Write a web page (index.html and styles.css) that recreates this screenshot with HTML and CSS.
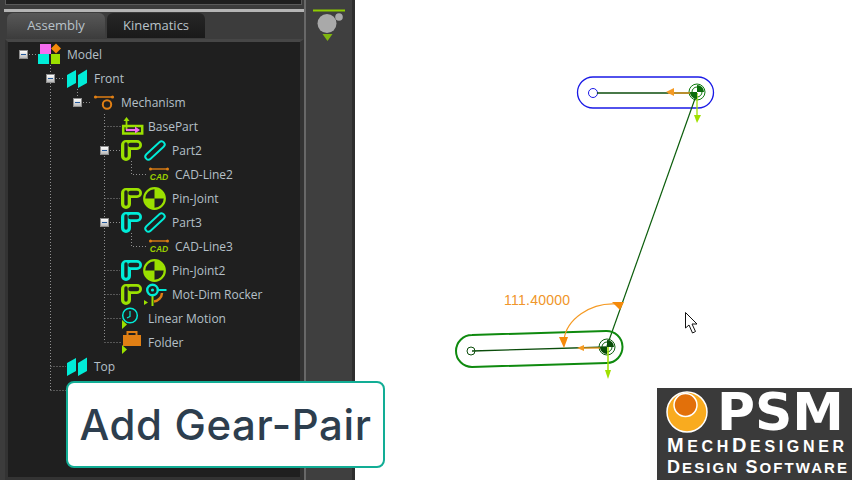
FILE: index.html
```html
<!DOCTYPE html>
<html lang="en">
<head>
<meta charset="utf-8">
<title>MechDesigner</title>
<link rel="stylesheet" href="styles.css">
</head>
<body>
<svg class="defs" width="0" height="0" aria-hidden="true">
  <defs>
    <symbol id="part" viewBox="0 0 21 21">
      <path d="M5 5H16M5 5V16" fill="none" stroke="currentColor" stroke-width="10" stroke-linecap="round"/>
      <path d="M5 4V16" fill="none" stroke="#1f1f1f" stroke-width="3.400" stroke-linecap="round"/>
      <path d="M9.500 5H16" fill="none" stroke="#1f1f1f" stroke-width="4.600" stroke-linecap="round"/>
    </symbol>
    <symbol id="link" viewBox="0 0 22 21">
      <path d="M4.500 16.500 17.500 4.500" fill="none" stroke="currentColor" stroke-width="8.200" stroke-linecap="round"/>
      <path d="M4.500 16.500 17.500 4.500" fill="none" stroke="#1f1f1f" stroke-width="4.400" stroke-linecap="round"/>
    </symbol>
    <symbol id="plane" viewBox="0 0 20 19">
      <path d="M0 6 9 1V14L0 19ZM11 6 20 .5V14L11 19Z" fill="currentColor"/>
    </symbol>
    <symbol id="joint" viewBox="0 0 23 23">
      <circle cx="11.500" cy="11.500" r="10.300" fill="#1f1f1f" stroke="#9be000" stroke-width="2.200"/>
      <path d="M11.500 11.500V1.500A10 10 0 0 1 21.500 11.500ZM11.500 11.500V21.500A10 10 0 0 1 1.500 11.500Z" fill="#9be000"/>
    </symbol>
    <symbol id="cad" viewBox="0 0 20 4">
      <path d="M1 2H19" stroke="#e07f14" stroke-width="1.400"/>
      <circle cx="1.500" cy="2" r="1.500" fill="#e07f14"/>
      <circle cx="18.500" cy="2" r="1.500" fill="#e07f14"/>
    </symbol>
  </defs>
</svg>
<div class="app">
  <aside class="left">
    <div class="topstrip"></div>
    <div class="divider"></div>
    <div class="tabs">
      <span class="tab active">Assembly</span>
      <span class="tab">Kinematics</span>
    </div>
    <div class="treebox">
      <svg class="lines" width="292" height="438" viewBox="8 42 292 438" aria-hidden="true">
        <path d="M50.500 65V390M29 54.500H38M56 78.500H65M77.500 89V102M83 102.500H92M104.500 114V342M104.500 126.500H122M110 150.500H120M131.500 161V174.500H148M104.500 198.500H120M110 222.500H120M131.500 233V246.500H148M104.500 270.500H120M104.500 294.500H120M104.500 318.500H121M104.500 342.500H122M50.500 366.500H66M50.500 390.500H66" fill="none" stroke="#8f8f8f" stroke-dasharray="1 2"/>
      </svg>
      <div class="row l1"><i class="tog"></i>
        <svg class="ico" width="24" height="22" viewBox="0 0 24 22"><rect x="2" y="1" width="11" height="10" fill="#f56cf0"/><rect y="11" width="11" height="10" fill="#00ecd8"/><rect x="13" y="11" width="9" height="10" fill="#9be000"/><path d="M18 .5 23 5.500 18 10.500 13 5.500Z" fill="#f58a0a"/></svg>
        <span class="lab gm">Model</span></div>
      <div class="row l2"><i class="tog"></i>
        <svg class="ico cy" width="20" height="19"><use href="#plane"/></svg>
        <span class="lab g2">Front</span></div>
      <div class="row l3"><i class="tog"></i>
        <svg class="ico" width="20" height="16" viewBox="0 0 20 16"><path d="M1 3H19" stroke="#e07f14" stroke-width="1.500"/><circle cx="1.500" cy="3" r="1.600" fill="#e07f14"/><circle cx="18.500" cy="3" r="1.600" fill="#e07f14"/><circle cx="13" cy="10.500" r="4.200" fill="none" stroke="#e07f14" stroke-width="2"/></svg>
        <span class="lab g3">Mechanism</span></div>
      <div class="row l4">
        <svg class="ico" width="22" height="18" viewBox="0 0 22 18"><rect x="1.200" y="9" width="19" height="7.500" fill="none" stroke="#9be000" stroke-width="2.500"/><path d="M4.500 3V13" stroke="#9be000" stroke-width="1.800"/><path d="M4.500 0 7.500 4H1.500Z" fill="#9be000"/><path d="M4 13H14" stroke="#f56cf0" stroke-width="2.200"/><path d="M18 13 13 9.500V16.500Z" fill="#f56cf0"/></svg>
        <span class="lab g4">BasePart</span></div>
      <div class="row l5"><i class="tog"></i>
        <svg class="ico lime" width="21" height="21"><use href="#part"/></svg>
        <svg class="ico cy sl" width="22" height="21"><use href="#link"/></svg>
        <span class="lab g5">Part2</span></div>
      <div class="row l6">
        <span class="cadico"><svg width="20" height="4"><use href="#cad"/></svg><b>CAD</b></span>
        <span class="lab g6">CAD-Line2</span></div>
      <div class="row l5">
        <svg class="ico lime" width="21" height="21"><use href="#part"/></svg>
        <svg class="ico sj" width="23" height="23"><use href="#joint"/></svg>
        <span class="lab g5">Pin-Joint</span></div>
      <div class="row l5"><i class="tog"></i>
        <svg class="ico cy" width="21" height="21"><use href="#part"/></svg>
        <svg class="ico cy sl" width="22" height="21"><use href="#link"/></svg>
        <span class="lab g5">Part3</span></div>
      <div class="row l6">
        <span class="cadico"><svg width="20" height="4"><use href="#cad"/></svg><b>CAD</b></span>
        <span class="lab g6">CAD-Line3</span></div>
      <div class="row l5">
        <svg class="ico cy" width="21" height="21"><use href="#part"/></svg>
        <svg class="ico sj" width="23" height="23"><use href="#joint"/></svg>
        <span class="lab g5">Pin-Joint2</span></div>
      <div class="row l5">
        <svg class="ico lime" width="21" height="21"><use href="#part"/></svg>
        <svg class="ico sj" width="23" height="24" viewBox="0 0 23 24"><path d="M1 18 5 20.500 1 23Z" fill="#9be000"/><path d="M19 11A9 9 0 0 1 11 19.500" fill="none" stroke="#e07f14" stroke-width="2.500"/><path d="M9.500 13V24" stroke="#9be000" stroke-width="2"/><circle cx="9.500" cy="8" r="5.300" fill="#1f1f1f" stroke="#00ecd8" stroke-width="2.400"/><circle cx="9.500" cy="8" r="1.600" fill="#00ecd8"/><path d="M14 8H23.500" stroke="#00ecd8" stroke-width="2"/></svg>
        <span class="lab g5">Mot-Dim Rocker</span></div>
      <div class="row l4">
        <svg class="ico" width="22" height="24" viewBox="0 0 22 24"><circle cx="8" cy="9.500" r="7.300" fill="none" stroke="#00ecd8" stroke-width="1.500"/><path d="M8 5V10.500L5 12" fill="none" stroke="#00ecd8" stroke-width="1.200"/><path d="M0 14 5 18.500 0 23Z" fill="#9be000"/></svg>
        <span class="lab g4">Linear Motion</span></div>
      <div class="row l4">
        <svg class="ico" width="22" height="24" viewBox="0 0 22 24"><rect x="1" y="5" width="18" height="11" fill="#e07f14"/><path d="M5.500 5V2H14.500V5" fill="none" stroke="#e07f14" stroke-width="2"/><path d="M0 15 5 19.500 0 24Z" fill="#9be000"/></svg>
        <span class="lab g4">Folder</span></div>
      <div class="row l2">
        <svg class="ico cy" width="20" height="19"><use href="#plane"/></svg>
        <span class="lab g2">Top</span></div>
      <div class="row l2">
        <svg class="ico cy" width="20" height="19"><use href="#plane"/></svg></div>
    </div>
  </aside>
  <div class="rail">
    <svg width="36" height="36" viewBox="0 0 36 36"><path d="M2 1.500H34" stroke="#8fcc00" stroke-width="2"/><circle cx="16" cy="14.500" r="9.500" fill="#a9a9a9"/><circle cx="28" cy="8" r="3.800" fill="#a9a9a9"/><path d="M11.500 25H21.500L16.500 32Z" fill="#7fb510"/></svg>
  </div>
  <main class="canvas">
    <svg class="drawing" width="497" height="480" viewBox="355 0 497 480">
      <g fill="none">
        <path d="M593 77H698A15.500 15.500 0 0 1 698 108H593A15.500 15.500 0 0 1 593 77Z" stroke="#1a1ae6" stroke-width="1.300"/>
        <circle cx="593" cy="93" r="4.500" stroke="#1a1ae6"/>
        <path d="M597 93H697" stroke="#0b4d0b" stroke-width="1.300"/>
        <circle cx="697" cy="92" r="8" stroke="#0b7a0b"/>
        <circle cx="697" cy="92" r="5" stroke="#0b7a0b"/>
        <path d="M697 93 607 346" stroke="#0b5d0b" stroke-width="1.200"/>
        <path d="M668 93H697" stroke="#f59a23" stroke-width="1.300"/>
        <path d="M697 93V118" stroke="#a0e000" stroke-width="1.300"/>
        <path d="M472 351 607 347" stroke="#0b4d0b" stroke-width="1.300"/>
        <path d="M472 335 606 331A16 16 0 0 1 607 363L472 367A16 16 0 0 1 472 335Z" stroke="#0f8a0f" stroke-width="2"/>
        <circle cx="471" cy="351" r="4" stroke="#0b4d0b"/>
        <circle cx="607" cy="347" r="8" stroke="#0b5d0b"/>
        <circle cx="607" cy="347" r="5" stroke="#0b5d0b"/>
        <path d="M579 348H607" stroke="#f59a23" stroke-width="1.300"/>
        <path d="M608 347V376" stroke="#a0e000" stroke-width="1.500"/>
        <path d="M564 340C566 320 590 302 617 304" stroke="#f59a23" stroke-width="1.200"/>
      </g>
      <path d="M697 92V85A7 7 0 0 1 704 92ZM697 92V99A7 7 0 0 1 690 92Z" fill="#0b6d0b"/>
      <path d="M607 347V340A7 7 0 0 1 614 347ZM607 347V354A7 7 0 0 1 600 347Z" fill="#084d08"/>
      <path d="M666 92 674 88V96Z" fill="#f59a23"/>
      <path d="M577 348 584 345V351Z" fill="#f59a23"/>
      <path d="M694 115H701L697 123Z" fill="#a0e000"/>
      <path d="M605 370H611L608 379Z" fill="#a0e000"/>
      <path d="M612 302 624 302 620 310Z" fill="#f58a0a"/>
      <path d="M559 337H568L564 348Z" fill="#f58a0a"/>
      <path d="M685.500 312.500V328L689 325 692.500 333 695.500 331.500 692 324H697Z" fill="#fff" stroke="#111"/>
      <text class="dim" x="504" y="305">111.40000</text>
    </svg>
  </main>
</div>
<div class="callout">Add Gear-Pair</div>
<div class="logo">
  <svg width="195" height="92" viewBox="0 0 195 92">
    <circle cx="30" cy="24" r="20" fill="#f9ab1f" stroke="#fff" stroke-width="1.500"/>
    <circle cx="28.500" cy="17" r="11.500" fill="#e2700a" stroke="#fff" stroke-width="1.500"/>
    <text class="psm" x="60" y="42" textLength="127" lengthAdjust="spacingAndGlyphs">PSM</text>
    <text class="mech" x="10" y="64" textLength="177" lengthAdjust="spacing"><tspan class="big">M</tspan>ECH<tspan class="big">D</tspan>ESIGNER</text>
    <text class="mech two" x="10" y="85" textLength="180" lengthAdjust="spacing"><tspan class="big2">D</tspan>ESIGN <tspan class="big2">S</tspan>OFTWARE</text>
  </svg>
</div>
</body>
</html>
```

FILE: styles.css
```css
* { box-sizing: border-box; }
html, body { margin: 0; height: 100%; overflow: hidden; background: #fff; }
body { width: 852px; height: 480px; position: relative; font-family: "Open Sans", sans-serif; }
.defs { position: absolute; }
.app { display: flex; height: 480px; }
.left { width: 304px; background: #3c3c3c; display: flex; flex-direction: column; padding-left: 4px; }
.topstrip { height: 5px; margin: 0 2px 0 1px; background: #1e1e1e; border: 1px solid #5a5a5a; border-top: 0; }
.divider { height: 3px; margin: 4px 0 1px; background: #b5b5b5; }
.tabs { display: flex; height: 26px; padding-left: 3px; gap: 2px; }
.tab { width: 98px; height: 25px; border-radius: 6px 6px 0 0; background: linear-gradient(#262626, #1a1a1a); color: #b9c2c9; font-size: 13px; display: flex; align-items: center; justify-content: center; padding-bottom: 2px; }
.tab.active { height: 26px; background: linear-gradient(#585858, #3c3c3c); }
.treebox { position: relative; flex: 1; margin-left: 1px; background: #1f1f1f; border: solid #333; border-width: 3px 4px 3px 3px; border-top-color: #464646; }
.lines { position: absolute; left: 0; top: 0; }
.row { position: relative; display: flex; align-items: center; height: 24px; }
.tog { position: absolute; top: 8px; width: 9px; height: 9px; background: linear-gradient(#fff, #b9b9b9); border: 1px solid #8e8e8e; }
.tog::after { content: ""; position: absolute; left: 1px; right: 1px; top: 3px; height: 1px; background: #245a9c; }
.ico { display: block; flex: none; overflow: visible; }
.cy { color: #00ecd8; }
.lime { color: #9be000; }
.sl { margin-left: 2px; }
.sj { margin-left: 1px; }
.lab { color: #b5c0c8; font-size: 12px; white-space: nowrap; }
.l1 { padding-left: 30px; } .l1 .tog { left: 11px; }
.l2 { padding-left: 59px; } .l2 .tog { left: 38px; }
.l3 { padding-left: 86px; } .l3 .tog { left: 65px; }
.l4 { padding-left: 114px; }
.l5 { padding-left: 113px; } .l5 .tog { left: 92px; }
.l6 { padding-left: 141px; }
.gm { margin-left: 5px; }
.g2 { margin-left: 7px; }
.g3 { margin-left: 7px; }
.g4 { margin-left: 4px; }
.g5 { margin-left: 6px; }
.g6 { margin-left: 6px; }
.cadico { display: flex; flex-direction: column; align-items: center; width: 20px; line-height: 1; }
.cadico svg { display: block; }
.cadico b { font: italic bold 8.500px "Liberation Sans", sans-serif; color: #9bd000; margin-top: 1px; }
.rail { width: 51px; background: #3f3f3f; padding: 9px 0 0 5px; border-left: 2px solid #686868; border-right: 3px solid #2e2e2e; }
.rail svg { display: block; }
.canvas { flex: 1; background: #fff; }
.drawing { display: block; }
.dim { font: 14px "Liberation Sans", sans-serif; letter-spacing: .25px; fill: #f0962a; }
.callout { position: absolute; left: 66px; top: 381px; width: 319px; height: 87px; background: #fff; border: 2px solid #12ad95; border-radius: 8px; color: #2d3e4e; font: 500 42px Inter, sans-serif; letter-spacing: .6px; display: flex; align-items: center; justify-content: center; }
.logo { position: absolute; left: 657px; top: 388px; width: 195px; height: 92px; background: #3a3a3a; }
.logo svg { display: block; overflow: visible; }
.psm { font: bold 51px "DejaVu Sans", sans-serif; fill: #fff; }
.mech { font: bold 16px "Liberation Sans", sans-serif; fill: #fff; }
.two { font-size: 15px; }
.big { font-size: 20px; }
.big2 { font-size: 18px; }
```
